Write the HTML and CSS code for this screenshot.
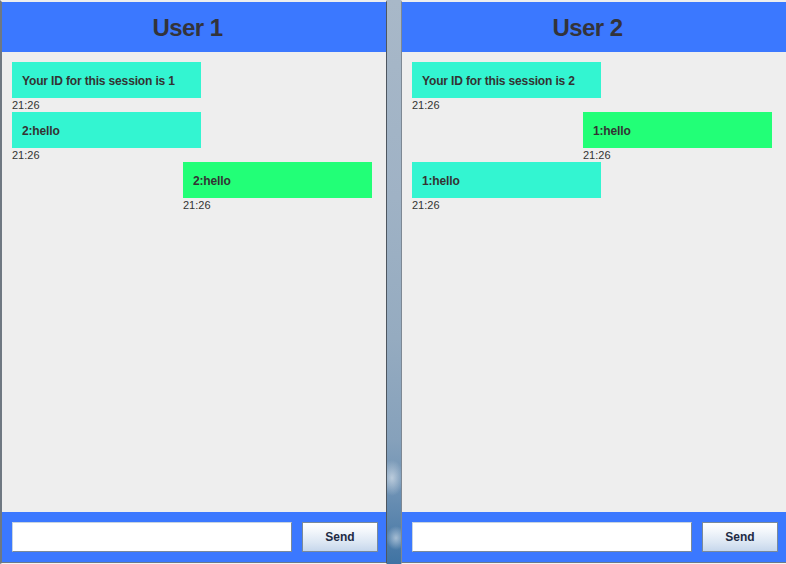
FILE: index.html
```html
<!DOCTYPE html>
<html lang="en">
<head>
    <meta charset="UTF-8">
    <title>Chat</title>
    <link rel="stylesheet" href="styles.css">
</head>
<body>
    <div class="window first">
        <div class="header">User 1</div>
        <div class="messages">
            <div class="msg">
                <div class="bubble">Your ID for this session is 1</div>
                <div class="time">21:26</div>
            </div>
            <div class="msg">
                <div class="bubble">2:hello</div>
                <div class="time">21:26</div>
            </div>
            <div class="msg mine">
                <div class="bubble">2:hello</div>
                <div class="time">21:26</div>
            </div>
        </div>
        <div class="footer">
            <input type="text" class="field">
            <button class="send">Send</button>
        </div>
    </div>

    <div class="desktop"></div>

    <div class="window second">
        <div class="header">User 2</div>
        <div class="messages">
            <div class="msg">
                <div class="bubble">Your ID for this session is 2</div>
                <div class="time">21:26</div>
            </div>
            <div class="msg mine">
                <div class="bubble">1:hello</div>
                <div class="time">21:26</div>
            </div>
            <div class="msg">
                <div class="bubble">1:hello</div>
                <div class="time">21:26</div>
            </div>
        </div>
        <div class="footer">
            <input type="text" class="field">
            <button class="send">Send</button>
        </div>
    </div>
</body>
</html>
```

FILE: styles.css
```css
body {
    margin: 0;
    padding: 0;
    height: 100vh;
    display: flex;
    font-family: 'Liberation Sans', Arial, sans-serif;
    background: #eeeeee;
    overflow: hidden;
}

.window {
    display: flex;
    flex-direction: column;
    width: 384px;
    height: 100vh;
    box-sizing: border-box;
    background: #eeeeee;
    border-top: 2px solid #eeeeee;
    border-bottom: 1px solid #f4f4f4;
}

.window.first {
    border-left: 2px solid #6f7882;
    border-right: 1px solid #4d5660;
    width: 387px;
}

.window.second {
    border-left: 1px solid #7d8894;
    flex: 1;
}

.desktop {
    width: 14px;
    flex-shrink: 0;
    background:
        radial-gradient(ellipse 12px 18px at 5px 478px, rgba(235, 240, 245, 0.6), rgba(235, 240, 245, 0) 100%),
        radial-gradient(ellipse 10px 12px at 9px 538px, rgba(235, 240, 245, 0.55), rgba(235, 240, 245, 0) 100%),
        linear-gradient(to bottom, #a8b8c8 0%, #9fb2c5 35%, #95abc0 60%, #86a1bb 78%, #6a8fb3 88%, #3f73a3 100%);
}

.header {
    height: 50px;
    flex-shrink: 0;
    box-sizing: border-box;
    background: #3b78ff;
    color: #33333a;
    font-size: 24px;
    font-weight: bold;
    letter-spacing: -0.6px;
    display: flex;
    align-items: center;
    justify-content: center;
    padding: 2px 13px 0 0;
}

.messages {
    flex: 1;
    display: flex;
    flex-direction: column;
    padding: 10px 14px 0 10px;
}

.msg {
    width: 189px;
}

.msg.mine {
    align-self: flex-end;
}

.bubble {
    height: 36px;
    box-sizing: border-box;
    display: flex;
    align-items: center;
    padding: 1px 0 0 10px;
    background: #33f5d1;
    color: #333333;
    font-size: 12px;
    font-weight: bold;
    letter-spacing: -0.15px;
}

.msg.mine .bubble {
    background: #22ff77;
}

.time {
    height: 14px;
    line-height: 14px;
    font-size: 11px;
    color: #333333;
}

.footer {
    height: 51px;
    flex-shrink: 0;
    box-sizing: border-box;
    background: #3b78ff;
    border-bottom: 1px solid #6c7a88;
    display: flex;
    align-items: center;
    gap: 10px;
    padding: 0 8px 0 10px;
}

.field {
    flex: 1;
    min-width: 0;
    height: 30px;
    box-sizing: border-box;
    margin: 0;
    background: #ffffff;
    border: 1px solid;
    border-color: #c8d4e0 #7a8a99 #7a8a99 #c8d4e0;
}

.send {
    width: 76px;
    height: 30px;
    margin: 0;
    box-sizing: border-box;
    border: 1px solid #7a8a99;
    background: linear-gradient(to bottom, #ffffff 0%, #f2f6fb 30%, #dbe6f3 70%, #c6d7ec 100%);
    color: #1e2b44;
    font-family: 'Liberation Sans', Arial, sans-serif;
    font-size: 12px;
    font-weight: bold;
}
```
